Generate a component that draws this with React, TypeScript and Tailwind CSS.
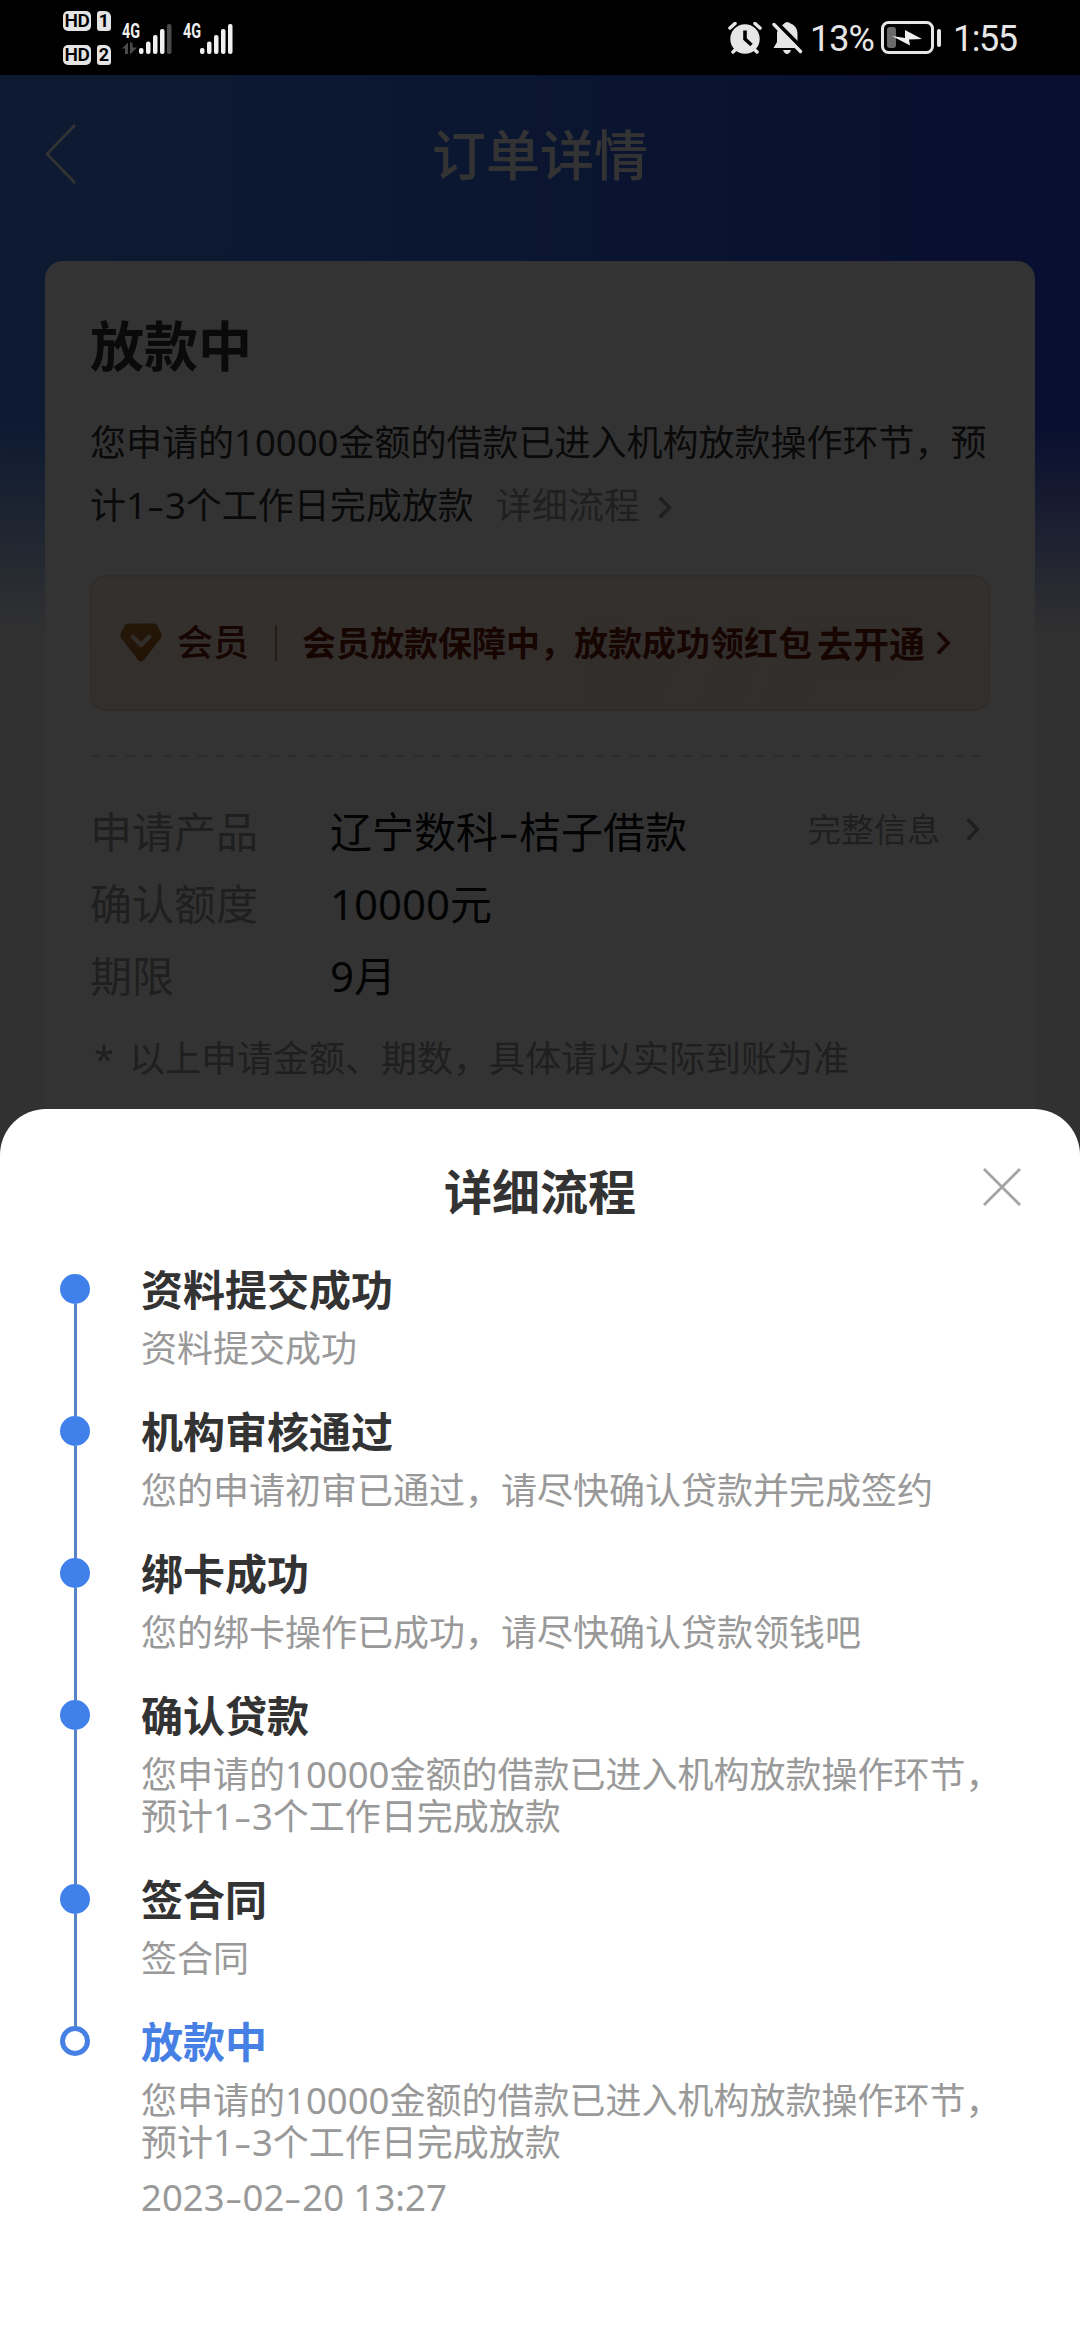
import React from "react";

const SANS = "font-['Noto_Sans','Noto_Sans_CJK_SC',sans-serif]";

const Dash = () => (
  <span className="inline-block w-[0.5em] text-center leading-none">
    <span className="inline-block scale-x-150">-</span>
  </span>
);

const Num = ({ children }: { children: React.ReactNode }) => (
  <span className="text-[1.014em] leading-none">{children}</span>
);

const Chevron = ({ className, stroke = "#999" }: { className: string; stroke?: string }) => (
  <svg className={className} viewBox="0 0 14 24" fill="none" stroke={stroke} strokeWidth="3.8">
    <path d="M1.5 1.5 11.5 12 1.5 22.5" />
  </svg>
);

const SimTag = ({ n }: { n: string }) => (
  <div className="flex items-center gap-[6px]">
    <span className="flex h-5 w-7 items-center justify-center rounded-[5px] bg-[#e4e4e4] font-['Roboto'] text-[19px] font-semibold leading-none tracking-[-0.5px] text-black">
      HD
    </span>
    <span className="flex h-5 w-[14px] items-center justify-center rounded-[3px] rounded-tr-[6px] bg-[#e4e4e4] font-['Roboto'] text-[18px] font-bold leading-none text-black">
      {n}
    </span>
  </div>
);

const Signal = ({ dim }: { dim?: boolean }) => (
  <svg className="h-[36px] w-[52px] overflow-visible" viewBox="0 -2 52 36">
    {dim && (
      <g fill="#4a4a4a">
        <path d="M0 26.500 6 20.500v11.500H3V26.500zM8 20.500h2.500v5H15l-7 7z" />
      </g>
    )}
    <g fill="#f0f0f0">
      <rect x="17" y="26" width="4.500" height="6" rx="2" />
      <rect x="24" y="19.500" width="4.500" height="12.500" rx="2" />
      <rect x="31" y="13" width="4.500" height="19" rx="2" />
      <rect x="38" y="7" width="4.500" height="25" rx="2" />
      <rect x="45" y="2" width="4.500" height="30" rx="2" fill={dim ? "#4a4a4a" : "#f0f0f0"} />
    </g>
    {/* Narrowed network label beside the bars */}
    <text transform="translate(0 15.500) scale(0.72 1)" fill="#f0f0f0" fontFamily="Roboto" fontSize="20" fontWeight="700">
      4G
    </text>
  </svg>
);

const StatusBar = () => (
  <div className="flex h-[75px] shrink-0 items-center justify-between bg-black pl-[63px] pr-[62px]">
    <div className="flex items-center">
      <div className="flex flex-col gap-[14px]">
        <SimTag n="1" />
        <SimTag n="2" />
      </div>
      <div className="ml-[11px] flex gap-[9px]">
        <Signal dim />
        <Signal />
      </div>
    </div>
    <div className="flex items-center text-[#e6e6e6]">
      <svg className="h-8 w-[34px]" viewBox="0 0 34 32">
        <circle cx="17" cy="17" r="14.700" fill="#e6e6e6" />
        <path d="M2 6 7 1.500M32 6 27 1.500M5 30l3-3M29 30l-3-3" stroke="#e6e6e6" strokeWidth="3.500" strokeLinecap="round" />
        <path d="M17 8.500V17l6.500 6" fill="none" stroke="#000" strokeWidth="3.600" />
      </svg>
      <svg className="ml-[10px] h-8 w-[31px]" viewBox="0 0 31 32">
        <path d="M11 2.500Q13 0 15 0t3.500 1.500C24 3.500 25.500 8 25.500 12v9l3 5H1.500l3.500-6v-8q0-5 4-7.500z" fill="#e6e6e6" />
        <path d="M11 28h8q-1.500 4-4 4t-4-4z" fill="#e6e6e6" />
        <path d="M4 0 31 27" stroke="#000" strokeWidth="4" />
        <path d="M2 2.500 28.500 29.500" stroke="#e6e6e6" strokeWidth="3.400" strokeLinecap="round" />
      </svg>
      <span className="ml-[7px] inline-block w-[65px] whitespace-nowrap pt-[2px] font-['Roboto'] text-[36px] leading-[44px] tracking-[-1px]">13%</span>
      <svg className="ml-[6px] h-[34px] w-[62px]" viewBox="0 0 62 34">
        <rect x="1.500" y="1.500" width="50" height="30" rx="6" fill="none" stroke="#e6e6e6" strokeWidth="3" />
        <rect x="6" y="6" width="9" height="21" rx="3" fill="#6a6a6a" />
        <path d="M11 15 24 17V9l17 9-13 .5 1 6z" fill="#f0f0f0" />
        <rect x="56" y="8" width="4" height="18" rx="2" fill="#e6e6e6" />
      </svg>
      <span className="ml-[10px] inline-block w-[65px] whitespace-nowrap pt-[2px] font-['Roboto'] text-[36px] leading-[44px] tracking-[-1.5px]">1:55</span>
    </div>
  </div>
);

const Diamond = () => (
  <svg className="h-10 w-[42px]" viewBox="0 0 42 40">
    <defs>
      <linearGradient id="gem" x1="0" y1="0" x2="1" y2="1">
        <stop offset="0" stopColor="#b87838" />
        <stop offset="1" stopColor="#a85c18" />
      </linearGradient>
    </defs>
    <path d="M8 0.500h26q2 0 3 1.500l4 8q1.500 3-.5 5.500L24 37q-3 3.500-6 0L1.500 15.500Q-.5 13 1 10l4-8Q6 .5 8 .5z" fill="url(#gem)" />
    <path d="M13 14l8 8 8-8" fill="none" stroke="#f6e0cc" strokeWidth="4.500" strokeLinecap="round" strokeLinejoin="round" />
  </svg>
);

const VipMark = () => (
  <svg className="absolute bottom-0 right-0 h-[110px] w-[410px]" viewBox="0 0 410 110" fill="#e8d5c3" fillOpacity="0.2">
    <path d="M0 0h48l6 70L92 0h46L76 110H12zM150 0h46l-30 110h-46zM212 0h90q50 4 40 44-10 36-56 38h-50l-8 28h-46z" />
  </svg>
);

const Row = ({ label, children }: { label: string; children: React.ReactNode }) => (
  <div className="flex h-[72px] items-center text-[42px]">
    <span className="w-[240px] text-[#999]">{label}</span>
    {children}
  </div>
);

const LoanText = () => (
  <>
    您申请的<Num>10000</Num>金额的借款已进入机构放款操作环节，
  </>
);
const DaysText = ({ lead }: { lead: string }) => (
  <>
    {lead}
    <Num>1</Num>
    <Dash />
    <Num>3</Num>个工作日完成放款
  </>
);

const OrderCard = () => (
  <div className="mx-[45px] mt-[30px] h-[1000px] rounded-[18px] bg-white px-[45px] text-[#333]">
    <h2 className="pt-[50px] text-[54px] font-bold leading-[70px]">放款中</h2>
    <p className="mt-[30px] whitespace-nowrap text-[36px] leading-[63px]">
      <LoanText />预
      <br />
      <DaysText lead="计" />
      <span className="ml-[22px] text-[#999]">详细流程</span>
      <Chevron className="ml-[18px] inline-block h-[23px] w-[14px] align-[0px]" />
    </p>
    <div className="relative mt-[38px] flex h-[136px] items-center overflow-hidden rounded-[16px] border-2 border-[#f5dccb] bg-gradient-to-b from-[#ffeee4] to-[#faeade] pl-[28px] text-[#741a0c]">
      <VipMark />
      <Diamond />
      <span className="ml-[15px] text-[36px] font-medium">会员</span>
      <span className="ml-[26px] h-9 w-[2px] bg-[#b98a72]" />
      <span className="relative ml-[25px] text-[34px] font-bold">会员放款保障中，放款成功领红包</span>
      <span className="relative ml-[5px] pt-[3px] text-[36px] font-bold">去开通</span>
      <Chevron className="relative ml-[11px] h-[24px] w-[15px]" stroke="#741a0c" />
    </div>
    <div className="mt-[44px] h-[2px] w-[893px] bg-[repeating-linear-gradient(90deg,#d4d4d4_0_9px,transparent_9px_18px)]" />
    <div className="pt-[39px] leading-[72px]">
      <Row label="申请产品">
        <span className="text-[#111]">
          辽宁数科
          <Dash />
          桔子借款
        </span>
        <span className="mb-1 ml-auto text-[33px] text-[#999]">完整信息</span>
        <Chevron className="mb-[6px] ml-[26px] mr-[10px] h-[23px] w-[14px]" />
      </Row>
      <Row label="确认额度">
        <span className="text-[#111]">10000元</span>
      </Row>
      <Row label="期限">
        <span className="text-[#111]">9月</span>
      </Row>
      <p className="mt-[11px] whitespace-pre text-[36px] text-[#999]">
        <span className="inline-block w-[39px] pl-[4px]">*</span>以上申请金额、期数，具体请以实际到账为准
      </p>
    </div>
  </div>
);

type Step = { title: string; body: React.ReactNode; date?: string };

const twoLines = (
  <>
    <LoanText />
    <br />
    <DaysText lead="预计" />
  </>
);

const steps: Step[] = [
  { title: "资料提交成功", body: "资料提交成功" },
  { title: "机构审核通过", body: "您的申请初审已通过，请尽快确认贷款并完成签约" },
  { title: "绑卡成功", body: "您的绑卡操作已成功，请尽快确认贷款领钱吧" },
  { title: "确认贷款", body: twoLines },
  { title: "签合同", body: "签合同" },
  { title: "放款中", body: twoLines, date: "2023-02-20 13:27" },
];

const StepItem = ({ step, last }: { step: Step; last: boolean }) => (
  <li className="flex">
    <div className="flex w-[30px] flex-col items-center pt-[14px]">
      <span
        className={
          last
            ? "h-[30px] w-[30px] shrink-0 rounded-full border-[5.5px] border-[#4680e4]"
            : "h-[30px] w-[30px] shrink-0 rounded-full bg-[#4080ea]"
        }
      />
      {!last && <span className="-mb-[14px] w-[3px] grow bg-[#5583c6]" />}
    </div>
    <div className={last ? "ml-[51px]" : "ml-[51px] pb-8"}>
      <h3 className={last ? "text-[42px] font-bold leading-[60px] text-[#4680e4]" : "text-[42px] font-bold leading-[60px] text-[#333]"}>
        {step.title}
      </h3>
      <p className="mt-2 whitespace-nowrap text-[36px] leading-[42px] text-[#999]">{step.body}</p>
      {step.date && (
        <p className="mt-[13px] text-[36px] leading-[42px] text-[#999]">
          {step.date.split("-").map((part, i) => (
            <React.Fragment key={i}>
              {i > 0 && <Dash />}
              <Num>{part}</Num>
            </React.Fragment>
          ))}
        </p>
      )}
    </div>
  </li>
);

const ProcessSheet = () => (
  <section className="absolute inset-x-0 bottom-0 h-[1231px] rounded-t-[46px] bg-white">
    <div className="relative flex h-[151px] items-center justify-center pt-[14px]">
      <h2 className="text-[48px] font-bold leading-[60px] text-[#333]">详细流程</h2>
      <svg className="absolute right-[59px] top-[59px] h-[38px] w-[38px]" viewBox="0 0 38 38" stroke="#a3a3a3" strokeWidth="2.800">
        <path d="M1 1 37 37M37 1 1 37" />
      </svg>
    </div>
    <ol className="pl-[60px]">
      {steps.map((s, i) => (
        <StepItem key={i} step={s} last={i === steps.length - 1} />
      ))}
    </ol>
  </section>
);

export default function App() {
  return (
    <div className={`relative flex h-[2340px] w-[1080px] flex-col overflow-hidden bg-[#f3f3f3] ${SANS}`}>
      <StatusBar />
      <main className="relative grow bg-[linear-gradient(180deg,transparent_350px,#f3f3f3_560px),linear-gradient(90deg,#4684f8,#376cf0_50%,#2a4af0_90%)]">
        <header className="relative flex h-[156px] items-center justify-center pt-1">
          <svg className="absolute left-[45px] top-[49px] h-[60px] w-[32px]" viewBox="0 0 32 60" fill="none" stroke="#fff" strokeWidth="2.600">
            <path d="M30 1 2 30 30 59" />
          </svg>
          <h1 className="text-[54px] font-medium leading-[70px] text-white">订单详情</h1>
        </header>
        <OrderCard />
        <div className="absolute inset-0 bg-black/80" />
      </main>
      <ProcessSheet />
    </div>
  );
}
